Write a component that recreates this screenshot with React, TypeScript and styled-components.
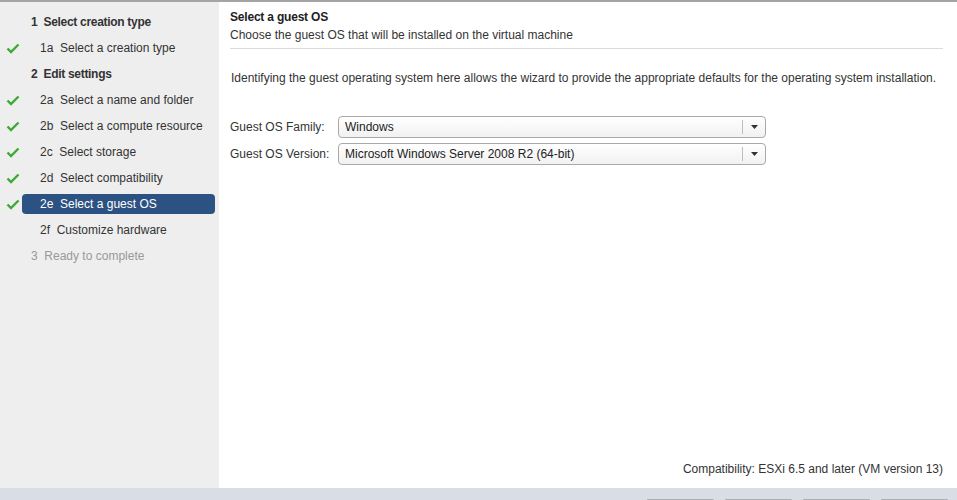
import React from "react";
import styled, { createGlobalStyle } from "styled-components";

const GlobalStyle = createGlobalStyle`
  html, body {
    margin: 0;
    padding: 0;
    height: 100%;
  }
  body {
    font-family: "Liberation Sans", Arial, sans-serif;
    font-size: 12px;
    color: #333;
    overflow: hidden;
  }
`;

const Page = styled.div`
  width: 957px;
  height: 500px;
  display: flex;
  flex-direction: column;
  border-top: 2px solid #a4a4a4;
  box-sizing: border-box;
`;

const Body = styled.div`
  flex: 1;
  display: flex;
  min-height: 0;
`;

const Sidebar = styled.div`
  width: 219px;
  background: #eeeeee;
  padding-top: 7px;
  box-sizing: border-box;
`;

const StepRow = styled.div<{ $sub?: boolean; $active?: boolean; $muted?: boolean; $header?: boolean }>`
  height: 26px;
  display: flex;
  align-items: center;
  position: relative;
  padding-left: 22px;

  .label {
    flex: 1;
    height: 20px;
    margin-right: 4px;
    display: flex;
    align-items: center;
    padding-left: ${(p) => (p.$sub ? "18px" : "9px")};
    border-radius: 4px;
    background: ${(p) => (p.$active ? "#2b5282" : "transparent")};
    color: ${(p) => (p.$active ? "#fff" : p.$muted ? "#999" : "#333")};
    font-weight: ${(p) => (p.$header ? "bold" : "normal")};
    letter-spacing: ${(p) => (p.$header ? "-0.3px" : "0")};
  }
`;

const Check = styled.span`
  position: absolute;
  left: 6px;
  top: 8px;
  width: 14px;
  height: 11px;
  display: flex;
`;

const Main = styled.div`
  flex: 1;
  background: #fff;
  padding: 6px 14px 0 11px;
  display: flex;
  flex-direction: column;
  min-width: 0;
`;

const Title = styled.div`
  font-weight: bold;
  color: #222;
  line-height: 18px;
  letter-spacing: -0.2px;
`;

const Subtitle = styled.div`
  line-height: 18px;
  color: #333;
`;

const Divider = styled.div`
  height: 1px;
  background: #dcdcdc;
  margin-top: 4px;
`;

const Description = styled.div`
  margin-top: 21px;
  padding-left: 1px;
  line-height: 16px;
  color: #333;
`;

const Form = styled.div`
  margin-top: 30px;
  display: grid;
  grid-template-columns: 108px 428px;
  row-gap: 5px;
  align-items: center;
`;

const FieldLabel = styled.div`
  color: #333;
`;

const Select = styled.div`
  height: 20px;
  border: 1px solid #a9a9a9;
  border-radius: 4px;
  background: linear-gradient(#ffffff, #f1f1f1);
  display: flex;
  align-items: center;
  box-sizing: content-box;

  .value {
    flex: 1;
    padding-left: 6px;
    color: #222;
  }
  .arrow {
    width: 22px;
    height: 14px;
    border-left: 1px solid #bdbdbd;
    display: flex;
    align-items: center;
    justify-content: center;
  }
`;

const Spacer = styled.div`
  flex: 1;
`;

const Compat = styled.div`
  text-align: right;
  padding-bottom: 12px;
  color: #333;
`;

const Footer = styled.div`
  height: 12px;
  background: #d9dee6;
  display: flex;
  justify-content: flex-end;
  align-items: flex-end;
  gap: 11px;
  padding-right: 9px;
`;

const FooterButton = styled.div`
  width: 67px;
  height: 1px;
  background: #aaaeb5;
  border-radius: 3px 3px 0 0;
`;

const CheckIcon = () => (
  <svg width="14" height="11" viewBox="0 0 14 11">
    <path d="M1.5 5.5 L5 9 L12.5 1.5" fill="none" stroke="#3fa935" strokeWidth="2.4" />
  </svg>
);

const Arrow = () => (
  <svg width="7" height="4" viewBox="0 0 7 4">
    <path d="M0 0 H7 L3.5 4 Z" fill="#333" />
  </svg>
);

const steps = [
  { text: "1\u00a0 Select creation type", header: true },
  { text: "1a\u00a0 Select a creation type", sub: true, done: true },
  { text: "2\u00a0 Edit settings", header: true },
  { text: "2a\u00a0 Select a name and folder", sub: true, done: true },
  { text: "2b\u00a0 Select a compute resource", sub: true, done: true },
  { text: "2c\u00a0 Select storage", sub: true, done: true },
  { text: "2d\u00a0 Select compatibility", sub: true, done: true },
  { text: "2e\u00a0 Select a guest OS", sub: true, done: true, active: true },
  { text: "2f\u00a0 Customize hardware", sub: true },
  { text: "3\u00a0 Ready to complete", muted: true },
];

export default function App() {
  return (
    <>
      <GlobalStyle />
      <Page>
        <Body>
          <Sidebar>
            {steps.map((s) => (
              <StepRow
                key={s.text}
                $sub={s.sub}
                $active={s.active}
                $muted={s.muted}
                $header={s.header}
              >
                {s.done && (
                  <Check>
                    <CheckIcon />
                  </Check>
                )}
                <span className="label">{s.text}</span>
              </StepRow>
            ))}
          </Sidebar>
          <Main>
            <Title>Select a guest OS</Title>
            <Subtitle>Choose the guest OS that will be installed on the virtual machine</Subtitle>
            <Divider />
            <Description>
              Identifying the guest operating system here allows the wizard to provide the appropriate
              defaults for the operating system installation.
            </Description>
            <Form>
              <FieldLabel>Guest OS Family:</FieldLabel>
              <Select>
                <span className="value">Windows</span>
                <span className="arrow">
                  <Arrow />
                </span>
              </Select>
              <FieldLabel>Guest OS Version:</FieldLabel>
              <Select>
                <span className="value">Microsoft Windows Server 2008 R2 (64-bit)</span>
                <span className="arrow">
                  <Arrow />
                </span>
              </Select>
            </Form>
            <Spacer />
            <Compat>Compatibility: ESXi 6.5 and later (VM version 13)</Compat>
          </Main>
        </Body>
        <Footer>
          <FooterButton />
          <FooterButton />
          <FooterButton />
          <FooterButton />
        </Footer>
      </Page>
    </>
  );
}
